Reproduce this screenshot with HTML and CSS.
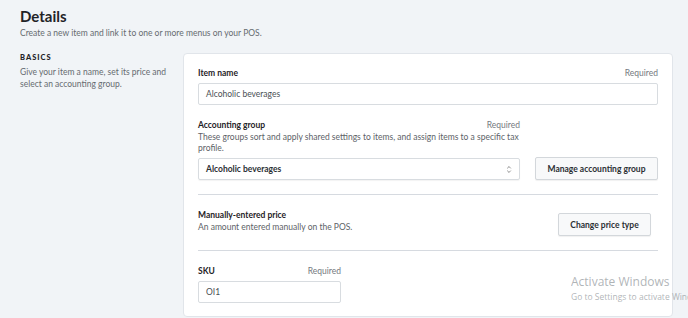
FILE: index.html
```html
<!DOCTYPE html>
<html lang="en">
<head>
    <meta charset="UTF-8">
    <meta name="viewport" content="width=device-width, initial-scale=1.0">
    <title>Details</title>
    <link rel="stylesheet" href="styles.css">
</head>
<body>
    <div class="page">
        <h1 class="title">Details</h1>
        <p class="subtitle">Create a new item and link it to one or more menus on your POS.</p>

        <div class="section">
            <div class="section-info">
                <h2 class="section-name">BASICS</h2>
                <p>Give your item a name, set its price and select an accounting group.</p>
            </div>

            <div class="card">
                <div class="field">
                    <div class="label-row">
                        <span class="label">Item name</span>
                        <span class="required">Required</span>
                    </div>
                    <div class="input">Alcoholic beverages</div>
                </div>

                <div class="group-row">
                    <div class="group-main">
                        <div class="label-row">
                            <span class="label">Accounting group</span>
                            <span class="required">Required</span>
                        </div>
                        <p class="hint">These groups sort and apply shared settings to items, and assign items to a specific tax profile.</p>
                        <div class="select">
                            <span>Alcoholic beverages</span>
                            <svg class="chevrons" width="6" height="9" viewBox="0 0 6 9"><path d="M1.2 3.4 L3 1.6 L4.8 3.4 M1.2 5.6 L3 7.4 L4.8 5.6" fill="none" stroke="#888" stroke-width="0.9"/></svg>
                        </div>
                    </div>
                    <button class="btn">Manage accounting group</button>
                </div>

                <hr class="divider">

                <div class="price-row">
                    <div>
                        <div class="label">Manually-entered price</div>
                        <p class="hint">An amount entered manually on the POS.</p>
                    </div>
                    <button class="btn btn-price">Change price type</button>
                </div>

                <hr class="divider">

                <div class="field sku">
                    <div class="label-row">
                        <span class="label">SKU</span>
                        <span class="required">Required</span>
                    </div>
                    <div class="input">OI1</div>
                </div>
            </div>
        </div>
    </div>

    <div class="watermark">
        <div class="wm-big">Activate Windows</div>
        <div class="wm-small">Go to Settings to activate Windows.</div>
    </div>
</body>
</html>
```

FILE: styles.css
```css
body {
    margin: 0;
    background-color: #f1f4f7;
    font-family: Lato, "Liberation Sans", sans-serif;
    color: #1f2327;
    overflow: hidden;
}
.page { padding: 5px 15px 0 20px; }
.title { font-size: 15px; font-weight: 700; margin: 0; line-height: 22px; }
.subtitle { font-size: 8.5px; color: #666b70; margin: 0; line-height: 12px; }

.section {
    display: grid;
    grid-template-columns: 163px 1fr;
    margin-top: 14px;
}
.section-name {
    font-size: 7.5px;
    font-weight: 900;
    letter-spacing: 1px;
    margin: 0;
    line-height: 10px;
}
.section-info p {
    font-size: 8.5px;
    color: #666b70;
    margin: 3px 0 0;
    line-height: 12px;
    padding-right: 10px;
}

.card {
    background-color: #fff;
    border: 1px solid #e1e5ea;
    border-radius: 4px;
    padding: 12px 14px 13px 14px;
}

.label-row { display: flex; justify-content: space-between; align-items: baseline; line-height: 14px; }
.label { font-size: 8.5px; font-weight: 700; line-height: 14px; }
.required { font-size: 8.5px; color: #74797e; }
.hint { font-size: 8.5px; color: #5d6267; margin: 0; line-height: 11px; }

.input, .select {
    box-sizing: border-box;
    height: 22px;
    border: 1px solid #d8dce0;
    border-radius: 2px;
    font-size: 8.5px;
    color: #4a4f54;
    padding: 0 7px;
    display: flex;
    align-items: center;
    margin-top: 3px;
}

.group-row {
    display: flex;
    align-items: flex-end;
    gap: 15px;
    margin-top: 13px;
}
.group-main { width: 322px; }
.group-main .label-row { line-height: 13px; }
.select {
    justify-content: space-between;
    font-weight: 700;
    color: #2b3034;
    box-shadow: 0 1px 1px rgba(0,0,0,0.05);
    margin-top: 4px;
}

.btn {
    box-sizing: border-box;
    height: 23px;
    border: 1px solid #d3d7db;
    border-radius: 2px;
    background-color: #f8f9fa;
    box-shadow: 0 1px 1px rgba(0,0,0,0.06);
    font-family: Lato, "Liberation Sans", sans-serif;
    font-size: 8.5px;
    font-weight: 700;
    color: #2b3034;
    padding: 0 11px;
    flex: 1;
}

.divider {
    border: 0;
    border-top: 1px solid #d6dae0;
    margin: 14px 0 0;
}

.price-row {
    display: flex;
    justify-content: space-between;
    align-items: flex-start;
    padding: 0 7px 0 0;
    margin: 13px 0 0;
}
.btn-price { flex: none; width: 93px; padding: 0; margin-top: 5px; }

.sku { width: 143px; margin-top: 13px; }
.sku .input { margin-top: 3px; }

.watermark {
    position: absolute;
    left: 571px;
    right: 0;
    top: 274px;
    overflow: hidden;
    color: rgba(150,155,160,0.75);
    font-family: "Open Sans", sans-serif;
    white-space: nowrap;
}
.wm-big { font-size: 12px; line-height: 16px; }
.wm-small { font-size: 8.5px; line-height: 14px; }
```
